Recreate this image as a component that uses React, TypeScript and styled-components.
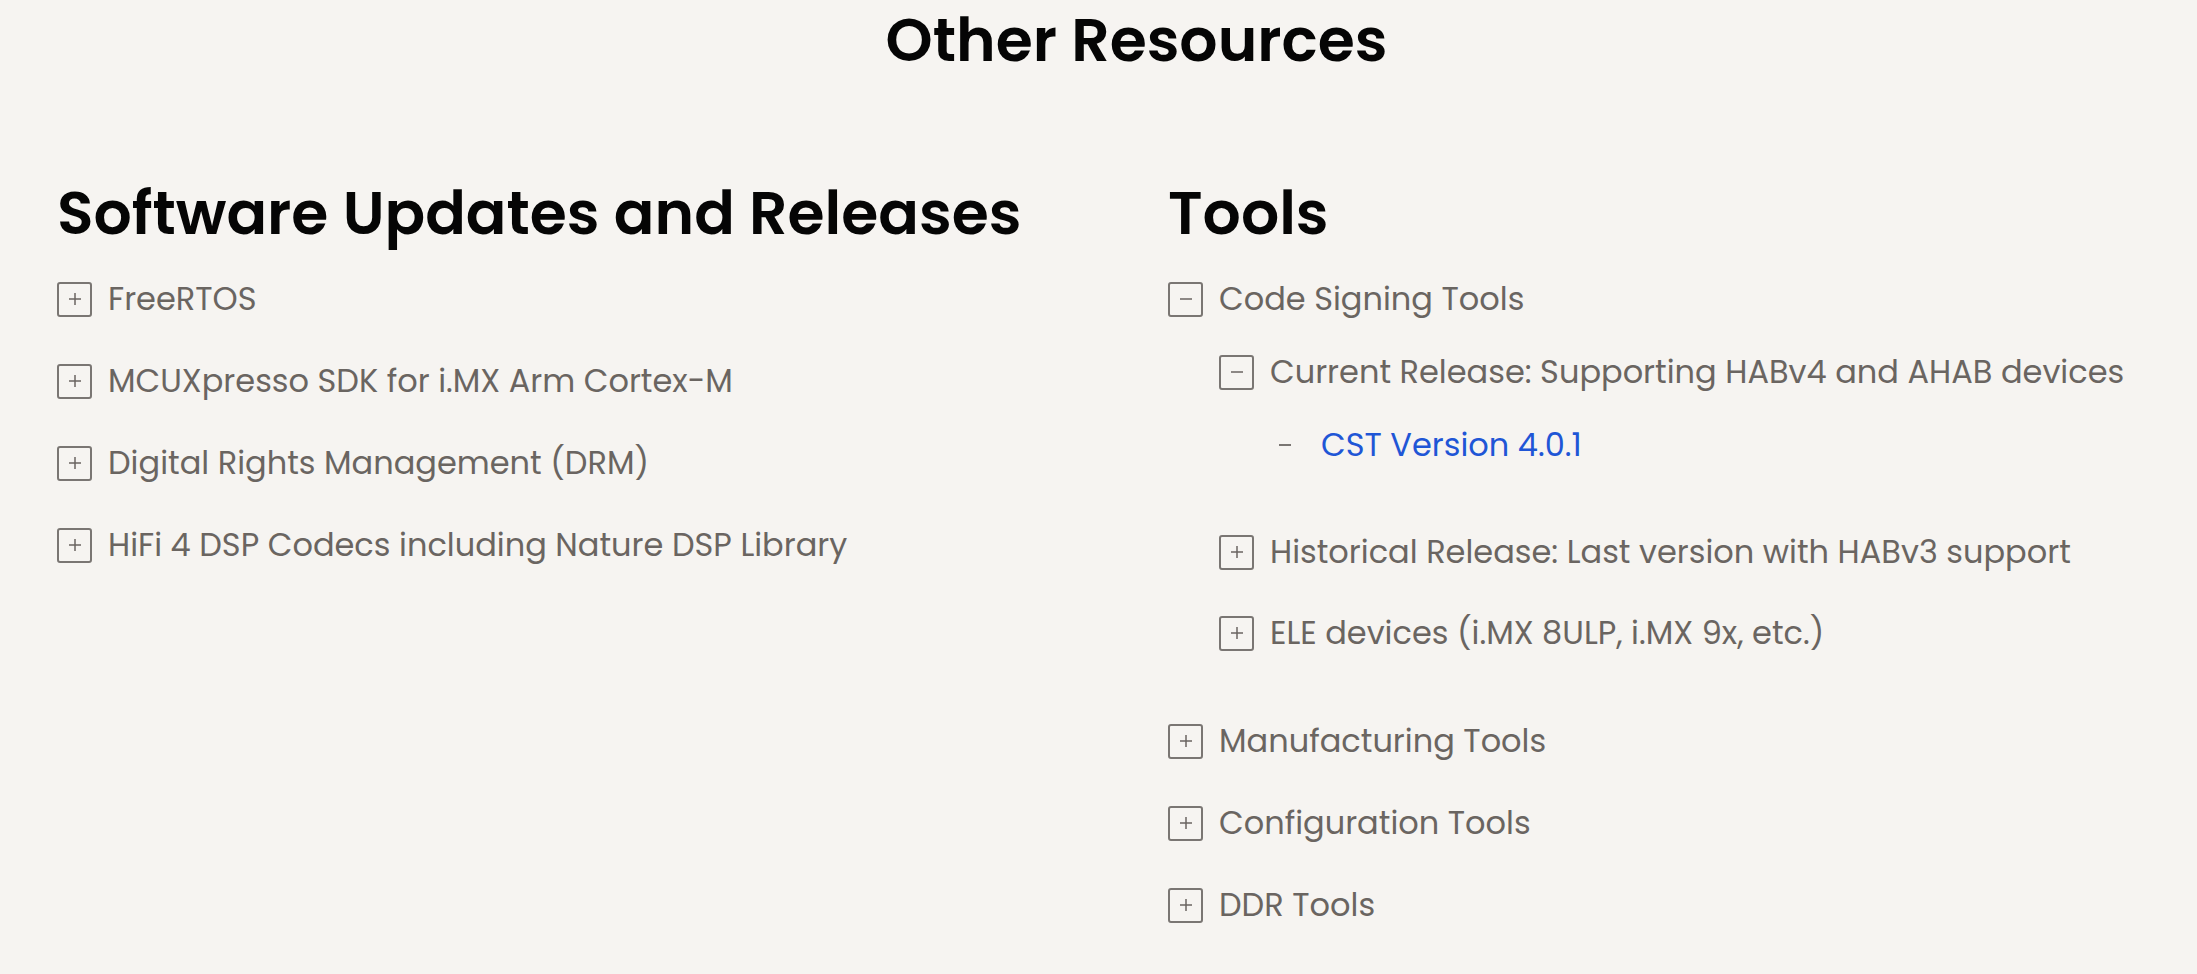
import React from 'react';
import styled, { createGlobalStyle } from 'styled-components';

const GlobalStyle = createGlobalStyle`
  html, body {
    margin: 0;
    padding: 0;
    background: #f6f4f1;
  }
  body {
    font-family: "Poppins", "Open Sans", "Noto Sans", sans-serif;
  }
`;

// Styled components
const Page = styled.div`
  width: 100%;
  min-height: 974px;
  padding: 10px 0 0 57px;
  box-sizing: border-box;
  background: #f6f4f1;
`;

const Title = styled.h2`
  margin: 0;
  padding-left: 19px;
  text-align: center;
  font-size: 60px;
  line-height: 60px;
  font-weight: 600;
  color: #050505;
`;

const Columns = styled.div`
  display: grid;
  grid-template-columns: 1049px 1fr;
  column-gap: 62px;
  margin-top: 105px;
`;

const Column = styled.section`
  display: flex;
  flex-direction: column;
`;

const Heading = styled.h3`
  margin: 0 0 24px;
  font-size: 60px;
  line-height: 76px;
  font-weight: 600;
  color: #050505;
`;

const List = styled.ul<{ $nested?: boolean }>`
  list-style: none;
  margin: ${({ $nested }) => ($nested ? '25px 0 26px 51px' : '0')};
  padding: 0;
  display: flex;
  flex-direction: column;
  gap: ${({ $nested }) => ($nested ? '33px' : '34px')};
`;

const Item = styled.li`
  display: flex;
  flex-direction: column;
`;

const Row = styled.div`
  display: flex;
  align-items: center;
  gap: 16px;
  height: 48px;
`;

const ToggleBox = styled.span`
  flex: none;
  width: 35px;
  height: 35px;
  box-sizing: border-box;
  border: 2px solid #7a7673;
  border-radius: 3px;
  display: flex;
  align-items: center;
  justify-content: center;
  cursor: pointer;
`;

const Bullet = styled.span`
  flex: none;
  width: 35px;
  display: flex;
  justify-content: center;
  padding-right: 6px;
  box-sizing: border-box;
  &::before {
    content: '';
    width: 12px;
    height: 2px;
    background: #7a7673;
  }
`;

const Label = styled.span`
  font-size: 32px;
  line-height: 48px;
  color: #6a6561;
  white-space: nowrap;
`;

const Link = styled.a`
  font-size: 32px;
  line-height: 48px;
  color: #1f56d6;
  text-decoration: none;
  white-space: nowrap;
  &:hover {
    text-decoration: underline;
  }
`;

type Node = {
  label: string;
  open?: boolean;
  href?: string;
  children?: Node[];
};

const softwareItems: Node[] = [
  { label: 'FreeRTOS' },
  { label: 'MCUXpresso SDK for i.MX Arm Cortex-M' },
  { label: 'Digital Rights Management (DRM)' },
  { label: 'HiFi 4 DSP Codecs including Nature DSP Library' },
];

const toolItems: Node[] = [
  {
    label: 'Code Signing Tools',
    open: true,
    children: [
      {
        label: 'Current Release: Supporting HABv4 and AHAB devices',
        open: true,
        children: [{ label: 'CST Version 4.0.1', href: '#cst-4-0-1' }],
      },
      { label: 'Historical Release: Last version with HABv3 support' },
      { label: 'ELE devices (i.MX 8ULP, i.MX 9x, etc.)' },
    ],
  },
  { label: 'Manufacturing Tools' },
  { label: 'Configuration Tools' },
  { label: 'DDR Tools' },
];

const Toggle: React.FC<{ open?: boolean }> = ({ open }) => (
  <ToggleBox>
    <svg width="14" height="14" viewBox="0 0 14 14">
      <line x1="1" y1="7" x2="13" y2="7" stroke="#6a6561" strokeWidth="1.5" />
      {!open && <line x1="7" y1="1" x2="7" y2="13" stroke="#6a6561" strokeWidth="1.5" />}
    </svg>
  </ToggleBox>
);

const TreeList: React.FC<{ items: Node[]; nested?: boolean }> = ({ items, nested }) => (
  <List $nested={nested}>
    {items.map((item) => (
      <Item key={item.label}>
        <Row>
          {item.href ? <Bullet /> : <Toggle open={item.open} />}
          {item.href ? <Link href={item.href}>{item.label}</Link> : <Label>{item.label}</Label>}
        </Row>
        {item.open && item.children && <TreeList items={item.children} nested />}
      </Item>
    ))}
  </List>
);

const App: React.FC = () => {
  return (
    <Page>
      <GlobalStyle />
      <Title>Other Resources</Title>
      <Columns>
        <Column>
          <Heading>Software Updates and Releases</Heading>
          <TreeList items={softwareItems} />
        </Column>
        <Column>
          <Heading>Tools</Heading>
          <TreeList items={toolItems} />
        </Column>
      </Columns>
    </Page>
  );
};

export default App;
